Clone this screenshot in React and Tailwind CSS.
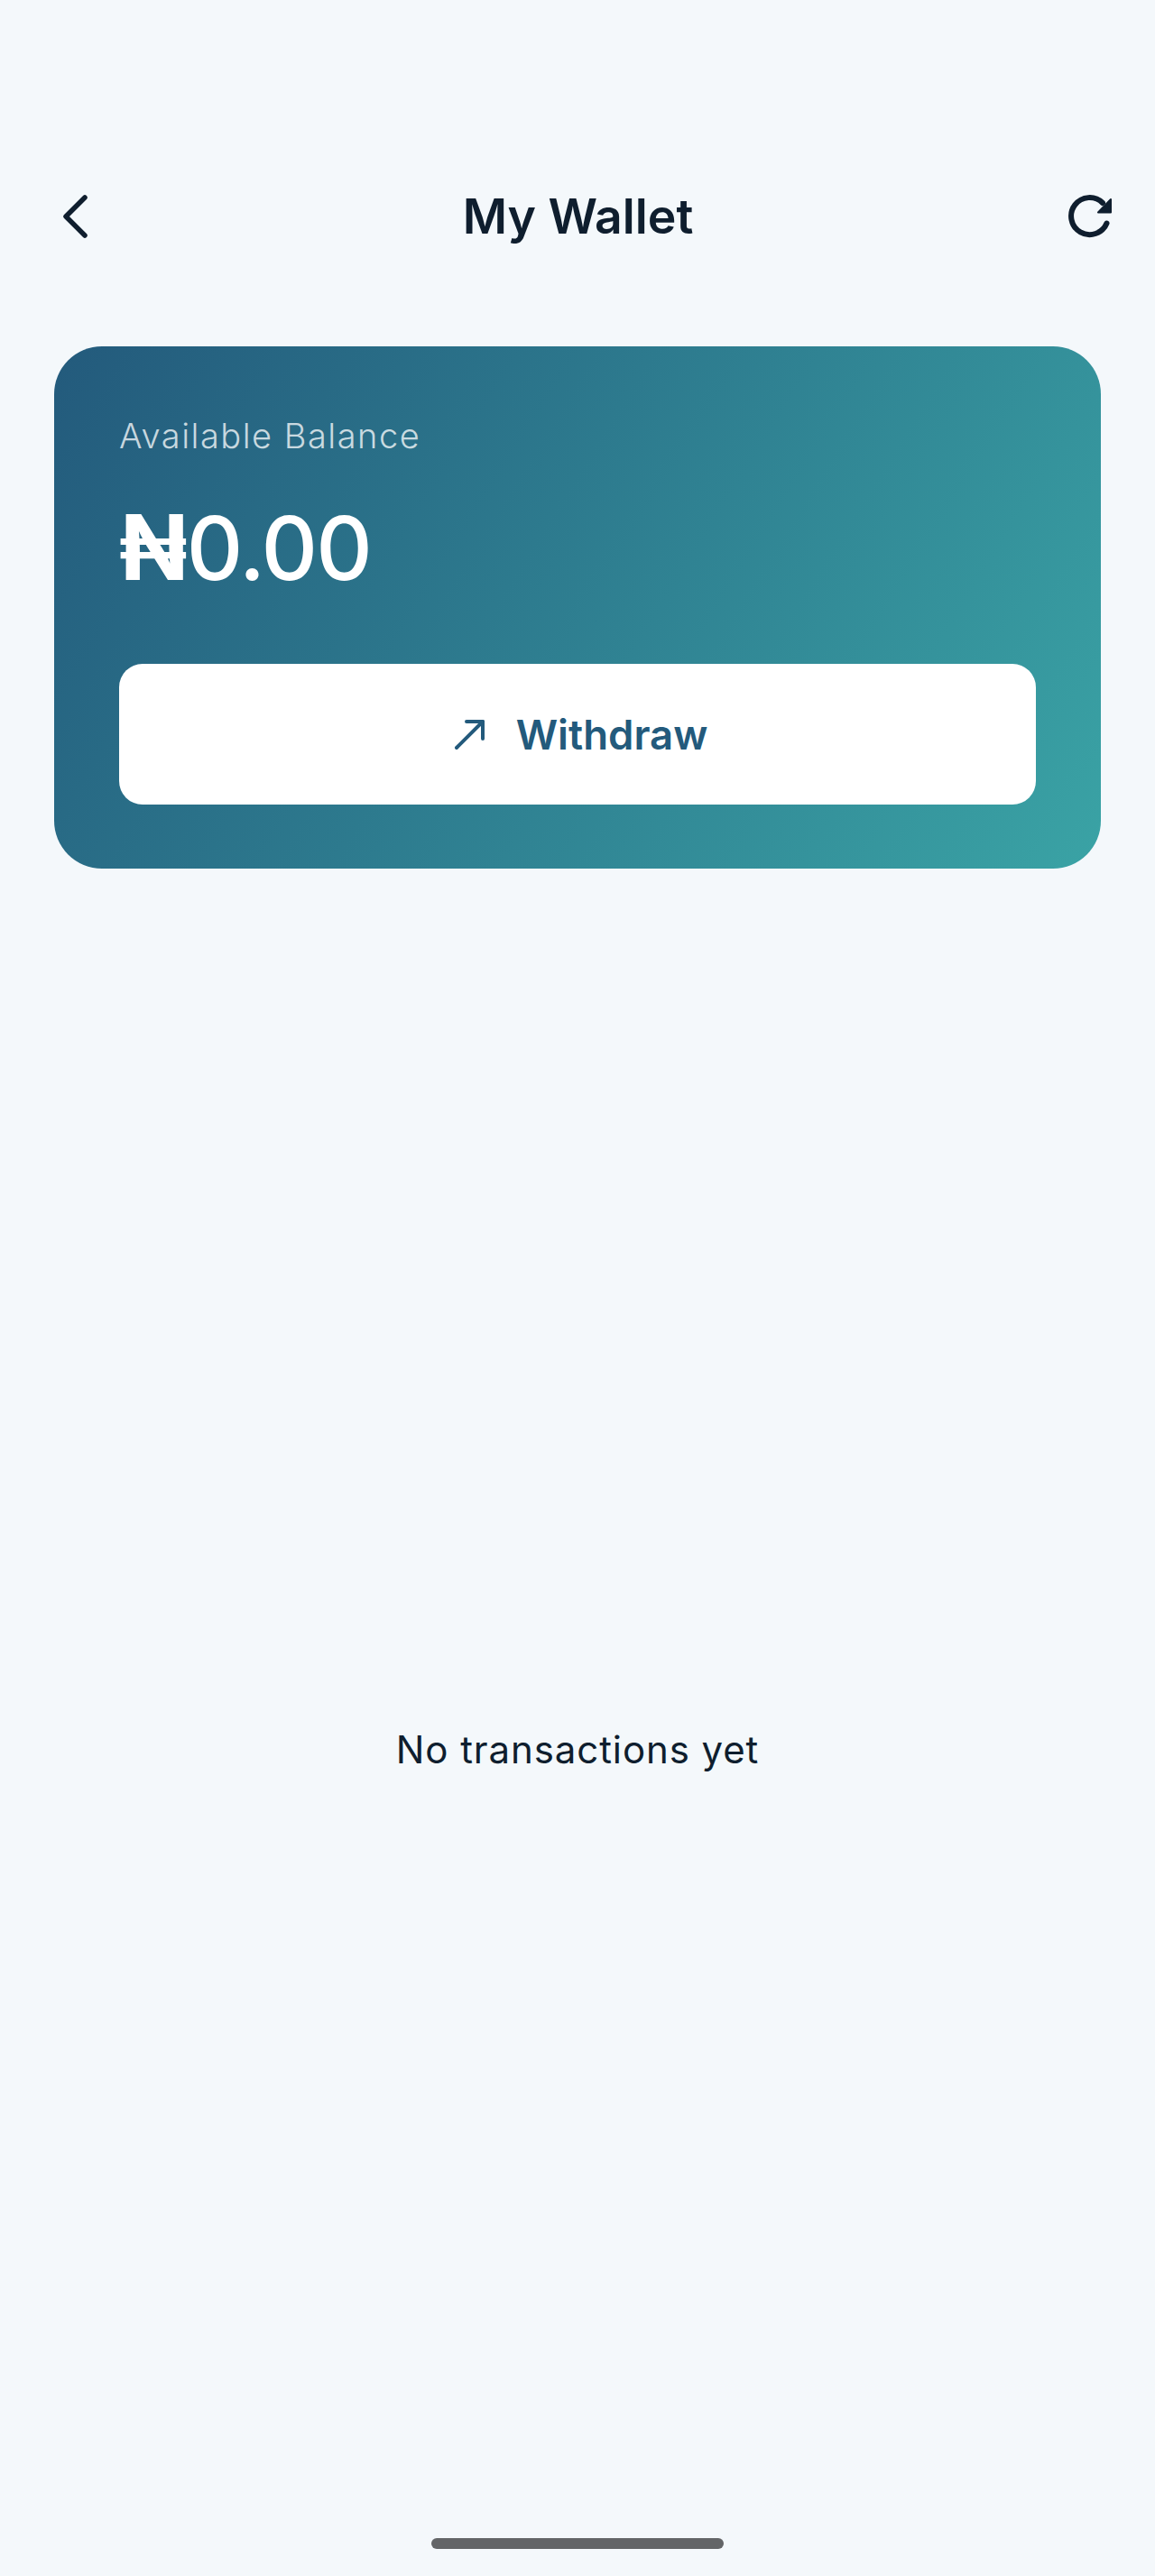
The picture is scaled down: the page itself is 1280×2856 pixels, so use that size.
import React from "react";

function BackIcon() {
  return (
    <svg width="27" height="48" viewBox="0 0 27 48" fill="none" stroke="#0f1e2e" strokeWidth="5.5" strokeLinecap="round" strokeLinejoin="round">
      <path d="M24 3 L3 24 L24 45" />
    </svg>
  );
}

function RefreshIcon() {
  return (
    <svg width="48" height="48" viewBox="0 0 48 48" fill="none">
      <path d="M42.5 31.5 A20.5 20.5 0 1 1 38 9" stroke="#0f1e2e" strokeWidth="6" strokeLinecap="round" />
      <path d="M47 5 V19.5 H33 Z" fill="#0f1e2e" stroke="#0f1e2e" strokeWidth="2" strokeLinejoin="round" />
    </svg>
  );
}

function ArrowIcon() {
  return (
    <svg width="50" height="50" viewBox="0 0 50 50" fill="none" stroke="#235a7c" strokeWidth="4" strokeLinecap="round" strokeLinejoin="round">
      <path d="M10 40 L39 11" />
      <path d="M21 11 H39 V30" />
    </svg>
  );
}

export default function App() {
  return (
    <div className="flex flex-col h-[2856px] bg-[#f4f8fb] font-['Inter',sans-serif] overflow-hidden">
      <header className="flex items-center justify-between h-[60px] mt-[210px] pl-[70px] pr-[48px]">
        <BackIcon />
        <h1 className="text-[53.5px] leading-none font-semibold text-[#0f1e2e]">My Wallet</h1>
        <RefreshIcon />
      </header>

      <section className="mx-[60px] mt-[114px] h-[579px] rounded-[53px] bg-[linear-gradient(122deg,#235a7c,#3aa3a5)] px-[72px] pt-[76px]">
        <p className="text-[38px] leading-[46px] tracking-[1.5px] font-light text-white/75">Available Balance</p>
        <p className="mt-[43px] text-[97px] leading-[116px] tracking-[-2px] font-medium text-white">
          <span className="text-[100px] tracking-[-1px] font-bold">₦</span>0.00
        </p>
        <button className="flex items-center justify-center gap-[26px] w-full h-[156px] mt-[70px] rounded-[26px] bg-white">
          <ArrowIcon />
          <span className="mt-[2px] text-[45.5px] font-semibold text-[#235a7c]">Withdraw</span>
        </button>
      </section>

      <p className="mt-[951px] text-center text-[42px] leading-[52px] tracking-[0.9px] text-[#0f1e2e]">No transactions yet</p>

      <div className="mt-auto mb-[30px] mx-auto w-[324px] h-[12px] rounded-full bg-[#636567]"></div>
    </div>
  );
}
